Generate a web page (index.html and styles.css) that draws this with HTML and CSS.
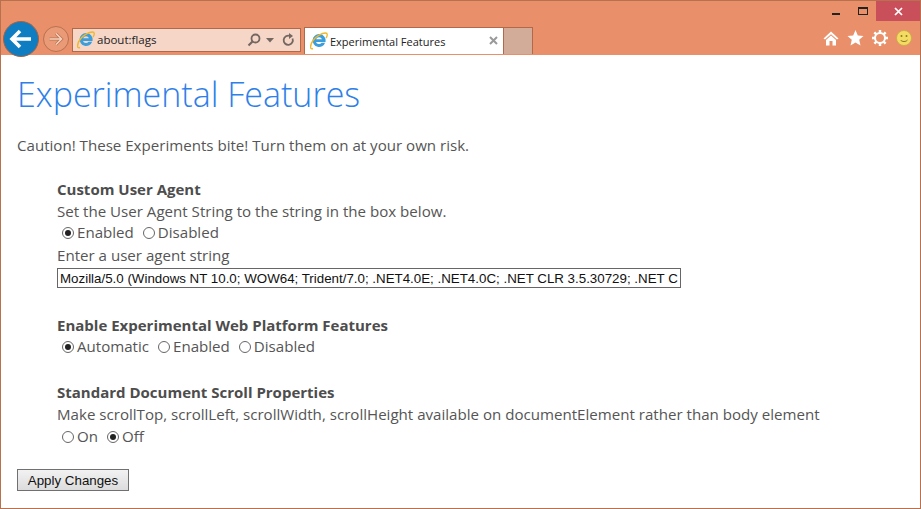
FILE: index.html
```html
<!DOCTYPE html>
<html lang="en">
<head>
<meta charset="utf-8">
<title>Experimental Features</title>
<link rel="stylesheet" href="styles.css">
</head>
<body>
<div class="window">
  <header class="chrome">
    <div class="nav">
      <div class="back"><svg width="24" height="22" viewBox="0 0 24 22"><path d="M11 3 3 11l8 8M3.500 11H22" fill="none" stroke="#fff" stroke-width="3.600"/></svg></div>
      <div class="forward"><svg width="16" height="14" viewBox="0 0 16 14"><path d="M8 1.500l5.500 5.500-5.500 5.500M13 7H1.500" fill="none" stroke="#b9744f" stroke-width="3"/><path d="M8 1.500l5.500 5.500-5.500 5.500M13 7H1.500" fill="none" stroke="#f6d3c0" stroke-width="1.500"/></svg></div>
      <div class="address">
        <svg class="ie" width="18" height="18" viewBox="0 0 18 18"><use href="#ie-logo"/></svg>
        <span class="url">about:flags</span>
        <svg class="search" width="14" height="14" viewBox="0 0 14 14"><circle cx="8.500" cy="5.500" r="4" fill="none" stroke="#74675f" stroke-width="1.800"/><path d="M5.500 8.500 1.500 12.500" stroke="#74675f" stroke-width="2.200"/></svg>
        <svg class="caret" width="8" height="5" viewBox="0 0 8 5"><path d="M0 0h8L4 4.500z" fill="#74675f"/></svg>
        <svg class="refresh" width="13" height="14" viewBox="0 0 13 14"><path d="M10.500 5.500A4.600 4.600 0 1 1 8 3" fill="none" stroke="#74675f" stroke-width="1.800"/><path d="M7 0v6l4-3z" fill="#74675f"/></svg>
      </div>
      <div class="tab">
        <svg class="ie" width="18" height="18" viewBox="0 0 18 18"><use href="#ie-logo"/></svg>
        <span class="tab-title">Experimental Features</span>
        <svg class="tab-close" width="9" height="9" viewBox="0 0 9 9"><path d="M1 1l7 7M8 1 1 8" stroke="#9a9a9a" stroke-width="2"/></svg>
      </div>
      <div class="new-tab"></div>
    </div>
    <div class="right">
      <div class="caption">
        <div class="cap-btn"><span class="min"></span></div>
        <div class="cap-btn"><span class="max"></span></div>
        <div class="cap-close"><svg width="9" height="9" viewBox="0 0 9 9"><path d="M1 1l7 7M8 1 1 8" stroke="#fff" stroke-width="1.700"/></svg></div>
      </div>
      <div class="tools">
        <svg width="16" height="15" viewBox="0 0 16 15"><path d="M8 .5 .5 7.500 2 8.500 8 3.200l6 5.300 1.500-1zM3 9v5.500h3.500V10h3v4.500H13V9L8 4.500z" fill="#fff"/></svg>
        <svg width="17" height="16" viewBox="0 0 17 16"><path d="M8.500 0l2.300 5.400 5.700.5-4.300 3.800 1.300 5.800-5-3-5 3 1.300-5.800L.5 5.900l5.700-.5z" fill="#fff"/></svg>
        <svg width="16" height="16" viewBox="0 0 16 16"><circle cx="8" cy="8" r="5" fill="none" stroke="#fff" stroke-width="2"/><path d="M8 0v16M0 8h16M2.300 2.300l11.400 11.400M13.700 2.300 2.300 13.700" stroke="#fff" stroke-width="2.400" stroke-dasharray="3 10"/></svg>
        <svg width="16" height="16" viewBox="0 0 16 16"><circle cx="8" cy="8" r="7.500" fill="#f4dc63" stroke="#c9a94a" stroke-width=".8"/><circle cx="5.500" cy="6" r="1" fill="#8a7a2a"/><circle cx="10.500" cy="6" r="1" fill="#8a7a2a"/><path d="M4.500 10c1.500 2 5.500 2 7 0" fill="none" stroke="#8a7a2a"/></svg>
      </div>
    </div>
  </header>

  <main class="content">
    <h1 class="title">Experimental Features</h1>
    <p class="caution">Caution! These Experiments bite! Turn them on at your own risk.</p>

    <section class="feature first">
      <h2 class="name">Custom User Agent</h2>
      <div class="line">Set the User Agent String to the string in the box below.</div>
      <div class="options">
        <label class="opt"><span class="radio on"></span>Enabled</label>
        <label class="opt"><span class="radio"></span>Disabled</label>
      </div>
      <div class="line">Enter a user agent string</div>
      <input class="ua" type="text" value="Mozilla/5.0 (Windows NT 10.0; WOW64; Trident/7.0; .NET4.0E; .NET4.0C; .NET CLR 3.5.30729; .NET CLR 2.0.50727; .NET CLR 3.0.30729)">
    </section>

    <section class="feature">
      <h2 class="name">Enable Experimental Web Platform Features</h2>
      <div class="options">
        <label class="opt"><span class="radio on"></span>Automatic</label>
        <label class="opt"><span class="radio"></span>Enabled</label>
        <label class="opt"><span class="radio"></span>Disabled</label>
      </div>
    </section>

    <section class="feature">
      <h2 class="name">Standard Document Scroll Properties</h2>
      <div class="line">Make scrollTop, scrollLeft, scrollWidth, scrollHeight available on documentElement rather than body element</div>
      <div class="options">
        <label class="opt"><span class="radio"></span>On</label>
        <label class="opt"><span class="radio on"></span>Off</label>
      </div>
    </section>

    <button class="apply" type="button">Apply Changes</button>
  </main>
</div>
<svg class="defs" width="0" height="0">
  <defs>
    <g id="ie-logo">
      <g transform="translate(-1.500 -2) scale(1.170)">
        <path d="M9 3.500a5.500 5.500 0 1 0 5.200 7.300h-3a2.700 2.700 0 0 1-4.800-.6H14.600A5.500 5.500 0 0 0 9 3.500zM6.500 8a2.600 2.600 0 0 1 5 0z" fill="#3a9ddc"/>
      </g>
      <path d="M3 16.500C-.5 18 0 13 3 8.500S12 1 15.500 1c2.500 0 2 3 .5 5" fill="none" stroke="#f0b72a" stroke-width="1.400"/>
    </g>
  </defs>
</svg>
</body>
</html>
```
FILE: styles.css
```css
* { box-sizing: border-box; }
html, body { margin: 0; height: 100%; }
body { font-family: "Open Sans", "Liberation Sans", sans-serif; overflow: hidden; }
.window {
  width: 921px; height: 509px;
  display: flex; flex-direction: column;
  background: #e9906a;
  border: 1px solid #b8714f;
}
.chrome { height: 54px; flex: none; display: flex; justify-content: space-between; }
.nav { display: flex; align-items: flex-start; padding: 20px 0 0 2px; position: relative; z-index: 1; }
.back {
  width: 36px; height: 36px; border-radius: 50%;
  background: #0f7dc2; border: 1px solid #a8623f;
  display: flex; align-items: center; justify-content: center;
}
.forward {
  width: 26px; height: 26px; border-radius: 50%;
  margin: 5px 0 0 4px;
  background: #ea9a76; border: 1px solid #b8714f;
  display: flex; align-items: center; justify-content: center;
}
.address {
  width: 229px; height: 24px; margin: 7px 0 0 3px;
  background: #f6d6c7; border: 1px solid #b0694a;
  display: flex; align-items: center; padding: 0 4px;
}
.ie { flex: none; }
.url { font-size: 11.5px; line-height: 20px; color: #222; margin: 0 0 0 2px; flex: 1; }
.search { margin: 0 5px 1px 0; }
.caret { margin-right: 8px; }
.refresh { margin: 0 1px 1px 0; }
.tab {
  width: 200px; height: 27px; margin: 6px 0 0 3px;
  background: #fff; border: 1px solid #b0694a; border-bottom: 0;
  display: flex; align-items: center; padding: 0 5px;
}
.tab-title { font-size: 11px; color: #222; margin-left: 2px; flex: 1; }
.tab-close { margin: 0 0 1px; }
.new-tab {
  width: 29px; height: 27px; margin-top: 6px;
  background: #d2ab99; border: 1px solid #b0694a; border-width: 1px 1px 0 0;
}
.right { display: flex; flex-direction: column; align-items: flex-end; }
.caption { display: flex; height: 20px; }
.cap-btn { width: 27px; display: flex; align-items: center; justify-content: center; }
.min { width: 8px; height: 2px; background: #222; margin-top: 5px; }
.max { width: 10px; height: 8px; border: 1px solid #222; border-top-width: 2px; }
.cap-close { width: 44px; background: #c9505a; display: flex; align-items: center; justify-content: center; }
.tools { display: flex; gap: 8px; align-items: center; padding: 9px 8px 0 0; }
.content { flex: 1; background: #fff; padding: 0 0 0 16px; color: #555; font-size: 15.100px; min-height: 0; }
.title { margin: 17px 0 0; font-size: 34px; line-height: 44px; font-weight: 300; color: #2e80e8; }
.caution { margin: 19px 0 0; line-height: 20px; font-size: 15.100px; }
.feature { margin: 24px 0 0 40px; }
.feature.first { margin-top: 24px; }
.first + .feature { margin-top: 26px; }
.name { margin: 0; font-size: 15px; line-height: 22px; font-weight: 700; color: #4d4d4d; }
.first .name { line-height: 21px; }
.line { line-height: 23px; white-space: nowrap; }
.options { display: flex; gap: 9px; line-height: 21px; padding-left: 5px; }
.first .options { margin: -1px 0 1px; }
.opt { display: flex; align-items: center; gap: 3px; }
.radio { width: 12px; height: 12px; border: 1px solid #666; border-radius: 50%; background: #fff; position: relative; flex: none; }
.radio.on::after { content: ""; position: absolute; inset: 2px; border-radius: 50%; background: #222; }
.ua {
  display: block; width: 624px; height: 20px; padding: 0 2px; margin: 1px 0 0;
  border: 1px solid #666; font: 13.330px "Liberation Sans", Arial, sans-serif; color: #111;
}
.apply {
  display: block; margin-top: 22px; width: 112px; height: 22px; padding: 0;
  border: 1px solid #707070; background: linear-gradient(#f2f2f2, #dcdcdc);
  font: 13.330px "Liberation Sans", Arial, sans-serif; color: #111;
}
.defs { position: absolute; }
```
